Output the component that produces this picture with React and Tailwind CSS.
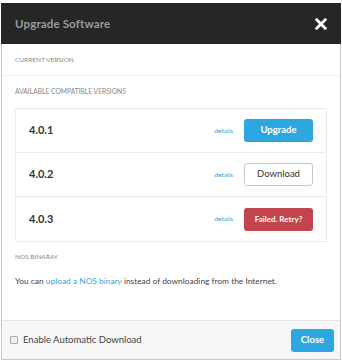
export default function App() {
  const font = { fontFamily: "Lato, 'Liberation Sans', sans-serif" };
  const rows = [
    { v: "4.0.1", kind: "upgrade" },
    { v: "4.0.2", kind: "download" },
    { v: "4.0.3", kind: "failed" },
  ];
  return (
    <div className="w-[342px] h-[362px] bg-white pt-[3px] pl-[1px]" style={font}>
      <div className="w-[340px] h-[357px] border border-[#c9c9c9] flex flex-col bg-white">
        <div className="h-[41px] bg-[#262626] flex items-center justify-between pl-[14px] pr-[14px] shrink-0 -mx-px -mt-px">
          <span className="text-[11.5px] text-[#9a9a9a] font-bold tracking-[0.15px]">Upgrade Software</span>
          <svg width="12" height="12" viewBox="0 0 12 12">
            <path d="M1.8 1.8L10.2 10.2M10.2 1.8L1.8 10.2" stroke="white" strokeWidth="2.8" strokeLinecap="square" />
          </svg>
        </div>
        <div className="flex-1 flex flex-col">
          <div className="h-[32px] flex items-center pl-[13px] border-b border-[#f0f0f0]">
            <span className="text-[6.5px] leading-[8px] text-[#888] uppercase">Current Version</span>
          </div>
          <div className="px-[13px] pt-[11px]">
            <div className="text-[6.7px] leading-[8px] text-[#888] uppercase">Available Compatible Versions</div>
            <div className="mt-[13px] border border-[#ececec] rounded-[2px]">
              {rows.map((r, i) => (
                <div
                  key={r.v}
                  className={`h-[44px] flex items-center justify-between pl-[13px] pr-[13px] ${i < 2 ? "border-b border-[#ececec]" : ""}`}
                >
                  <span className="text-[11px] font-bold text-[#333]">{r.v}</span>
                  <div className="flex items-center gap-[11px]">
                    <span className="text-[6.5px] text-[#3aa3dc]">details</span>
                    {r.kind === "upgrade" && (
                      <button className="w-[69px] h-[23px] rounded-[3px] bg-[#2ca7e2] text-white text-[9.5px] font-bold">Upgrade</button>
                    )}
                    {r.kind === "download" && (
                      <button className="w-[69px] h-[23px] rounded-[3px] bg-white border border-[#c8c8c8] text-[#333] text-[9.5px]">Download</button>
                    )}
                    {r.kind === "failed" && (
                      <button className="w-[69px] h-[23px] rounded-[3px] bg-[#c4444d] text-white text-[8px] font-bold">Failed. Retry?</button>
                    )}
                  </div>
                </div>
              ))}
            </div>
            <div className="mt-[11px] text-[6.5px] leading-[8px] text-[#888] uppercase">NOS Binaray</div>
            <div className="mt-[15px] text-[8.4px] leading-[10px] text-[#444] whitespace-nowrap">
              You can <span className="text-[#3aa3dc]">upload a NOS binary</span> instead of downloading from the Internet.
            </div>
          </div>
        </div>
        <div className="h-[39px] shrink-0 border-t border-[#e4e4e4] bg-[#f6f6f6] flex items-center justify-between pl-[8px] pr-[6px]">
          <label className="flex items-center gap-[5px]">
            <span className="w-[8px] h-[8px] border border-[#aaa] bg-[#f0f0f0] rounded-[1px]"></span>
            <span className="text-[9.5px] text-[#444]">Enable Automatic Download</span>
          </label>
          <button className="w-[43px] h-[23px] rounded-[3px] bg-[#2ca7e2] text-white text-[9.5px] font-bold">Close</button>
        </div>
      </div>
    </div>
  );
}
